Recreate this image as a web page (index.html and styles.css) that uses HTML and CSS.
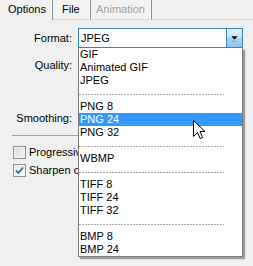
FILE: index.html
```html
<!DOCTYPE html>
<html lang="en">
<head>
    <meta charset="UTF-8">
    <title>Export options</title>
    <link rel="stylesheet" href="styles.css">
</head>
<body>
    <div class="window">
        <div class="tabs">
            <div class="tab active">Options</div>
            <div class="tab">File</div>
            <div class="tab disabled">Animation</div>
            <div class="tab-fill"></div>
        </div>

        <div class="panel">
            <div class="field">
                <span class="label">Format:</span>
                <div class="combo">
                    <span class="combo-value">JPEG</span>
                    <span class="combo-button">
                        <svg viewBox="0 0 16 18" width="16" height="18">
                            <polygon points="4.5,7 11.5,7 8,10.5" fill="#000"></polygon>
                            <line x1="6" y1="12.5" x2="10" y2="12.5" stroke="#3d6f99" stroke-width="1" stroke-dasharray="1 1"></line>
                        </svg>
                    </span>
                </div>
            </div>
            <div class="field quality">
                <span class="label">Quality:</span>
            </div>
            <div class="field smoothing">
                <span class="label">Smoothing:</span>
            </div>
            <div class="rule"></div>
            <label class="check">
                <span class="box"></span>
                <span class="check-text">Progressive</span>
            </label>
            <label class="check">
                <span class="box checked">
                    <svg viewBox="0 0 13 13" width="13" height="13">
                        <path d="M3 6.5 L5.3 9 L10 3.5" fill="none" stroke="#2a5fb0" stroke-width="1.8"></path>
                    </svg>
                </span>
                <span class="check-text">Sharpen color edges</span>
            </label>
        </div>

        <!-- open format list -->
        <ul class="dropdown">
            <li>GIF</li>
            <li>Animated GIF</li>
            <li>JPEG</li>
            <li class="sep"></li>
            <li>PNG 8</li>
            <li class="hover">PNG 24</li>
            <li>PNG 32</li>
            <li class="sep"></li>
            <li>WBMP</li>
            <li class="sep"></li>
            <li>TIFF 8</li>
            <li>TIFF 24</li>
            <li>TIFF 32</li>
            <li class="sep"></li>
            <li>BMP 8</li>
            <li>BMP 24</li>
        </ul>

        <svg class="cursor" viewBox="0 0 13 20" width="13" height="20">
            <path d="M0.5 0.5 L0.5 16.5 L4.5 12.5 L7.2 18.6 L9.6 17.5 L7 11.5 L12 11.5 Z" fill="#fff" stroke="#000" stroke-width="1" stroke-linejoin="miter"></path>
        </svg>
    </div>
</body>
</html>
```

FILE: styles.css
```css
:root {
    --face: #f0f0f0;
    --text: #000000;
    --muted: #a0a0a0;
    --edge: #898c95;
    --focus: #3c7fb1;
    --highlight: #3399ff;
}

* {
    margin: 0;
    padding: 0;
    box-sizing: border-box;
}

body {
    background: var(--face);
    color: var(--text);
    font-family: "Liberation Sans", Arial, sans-serif;
    font-size: 11px;
    overflow: hidden;
}

.window {
    position: relative;
    width: 253px;
    height: 266px;
}

/* tab strip */
.tabs {
    display: flex;
    height: 20px;
}

.tab {
    height: 20px;
    line-height: 18px;
    padding: 0 8px;
    border-right: 1px solid var(--edge);
    border-bottom: 1px solid #d8d8d8;
    box-shadow: inset -1px 0 0 #ffffff;
    background: #f3f3f3;
}

.tab.active {
    background: var(--face);
    border-bottom: none;
    padding: 0 8px;
    width: 53px;
}

.tab:nth-child(2) {
    width: 38px;
    padding-left: 9px;
}

.tab.disabled {
    color: var(--muted);
    width: 61px;
    padding-left: 5px;
}

.tab-fill {
    flex: 1;
    border-bottom: 1px solid #d8d8d8;
}

/* form */
.panel {
    padding-top: 8px;
}

.field {
    display: flex;
    align-items: center;
    gap: 6px;
    height: 20px;
}

.label {
    width: 72px;
    text-align: right;
}

.quality {
    margin-top: 7px;
}

.smoothing {
    margin-top: 33px;
}

.combo {
    display: flex;
    align-items: center;
    width: 165px;
    height: 20px;
    background: #ffffff;
    border: 1px solid var(--focus);
    padding: 0 0 0 2px;
}

.combo-value {
    flex: 1;
}

.combo-button {
    display: flex;
    width: 16px;
    height: 18px;
    border-left: 1px solid var(--focus);
    background: linear-gradient(#e3f1fb 0%, #c6e3f7 48%, #a3d2f1 52%, #8fc7ee 100%);
}

.combo-button svg {
    display: block;
}

.rule {
    margin: 7px 0 0 12px;
    width: 228px;
    height: 1px;
    background: #a0a0a0;
}

.check {
    display: flex;
    align-items: center;
    gap: 3px;
    height: 14px;
    margin: 9px 0 0 13px;
    white-space: nowrap;
}

.check + .check {
    margin-top: 4px;
}

.box {
    flex-shrink: 0;
    width: 13px;
    height: 13px;
    border: 1px solid #8e8f8f;
    background: linear-gradient(135deg, #dcdcdc, #f6f6f6);
    box-shadow: inset 0 0 0 1px #f4f4f4;
}

.box.checked {
    background: linear-gradient(135deg, #e6e6e6, #ffffff);
}

.box svg {
    display: block;
    margin: -1px;
}

/* format list */
.dropdown {
    position: absolute;
    left: 78px;
    top: 48px;
    width: 165px;
    list-style: none;
    background: #ffffff;
    border: 1px solid #7a7a7a;
    border-top: none;
    box-shadow: 2px 2px 1px rgba(0, 0, 0, 0.35);
}

.dropdown li {
    height: 13px;
    line-height: 13px;
    padding-left: 1px;
    white-space: nowrap;
}

.dropdown li.hover {
    background: var(--highlight);
    color: #ffffff;
}

.dropdown li.sep {
    position: relative;
}

.dropdown li.sep::after {
    content: "";
    position: absolute;
    left: 0;
    top: 7px;
    width: 145px;
    height: 1px;
    background: repeating-linear-gradient(90deg, #a9a9a9 0 2px, transparent 2px 3px);
}

.cursor {
    position: absolute;
    left: 193px;
    top: 120px;
}
```
